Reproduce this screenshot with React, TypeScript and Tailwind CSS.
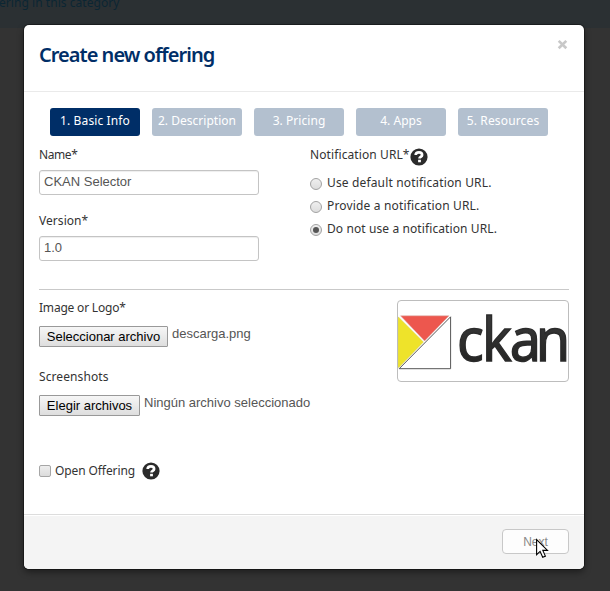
import React from "react";

const tabs = [
  { label: "1. Basic Info", tracking: "tracking-[0.12px]", active: true },
  { label: "2. Description", tracking: "tracking-[0.02px]", active: false },
  { label: "3. Pricing", tracking: "tracking-[0.05px]", active: false },
  { label: "4. Apps", tracking: "tracking-[0.05px]", active: false },
  { label: "5. Resources", tracking: "tracking-[0.15px]", active: false },
];

const options = [
  { label: "Use default notification URL.", tracking: "tracking-[0.15px]", checked: false },
  { label: "Provide a notification URL.", tracking: "tracking-[0.16px]", checked: false },
  { label: "Do not use a notification URL.", tracking: "tracking-[0.1px]", checked: true },
];

function Help() {
  return (
    <svg className="size-[18px] shrink-0" viewBox="0 0 18 18">
      <circle cx="9" cy="9" r="8.6" fill="#2b2b2b" />
      <path d="M5.7 7.1C5.7 5.1 7.2 4.4 9 4.4s3.1 1 3.1 2.5c0 2-2.6 1.9-2.6 3.6" fill="none" stroke="#fff" strokeWidth="2.7" />
      <path d="M8.1 11.8h2.8v2.5H8.1z" fill="#fff" />
    </svg>
  );
}

function Field({ label, value, tracking }: { label: string; value: string; tracking: string }) {
  return (
    <div className="h-[66px]">
      <div className={`h-[23px] leading-[16px] ${tracking}`}>{label}</div>
      <div className="h-[25px] w-[220px] rounded-[3px] border border-[#c4c4c4] bg-white pl-[4px] font-['Liberation_Sans',sans-serif] text-[13px] leading-[22px] text-[#555] shadow-[inset_0_1px_1px_rgba(0,0,0,0.07)]">
        {value}
      </div>
    </div>
  );
}

function FilePicker({ label, button, width, value, tracking }: { label: string; button: string; width: string; value: string; tracking: string }) {
  return (
    <div className="h-[69px]">
      <div className={`h-[26px] leading-[16px] ${tracking}`}>{label}</div>
      <div className="flex gap-1 whitespace-nowrap font-['Liberation_Sans',sans-serif] text-[13px]">
        <div className={`h-[21px] rounded-[1px] border border-[#999] bg-linear-to-b from-[#f6f6f6] to-[#dedede] text-center leading-[19px] text-black ${width}`}>
          {button}
        </div>
        <div className="leading-[15px] text-[#555]">{value}</div>
      </div>
    </div>
  );
}

function CkanLogo() {
  return (
    <svg className="block h-[80px] w-[170px]" viewBox="398 301 170 80">
      <defs>
        <linearGradient id="ink" x1="0" y1="0" x2="0" y2="1">
          <stop offset="0.3" stopColor="#383838" />
          <stop offset="1" stopColor="#1d1d1b" />
        </linearGradient>
      </defs>
      <path d="M400.5 315.8H449L424.6 341z" fill="#ed574e" stroke="#d9b4ae" strokeWidth="0.5" />
      <path d="M398.5 317l25 25L399 367.5h-1V317z" fill="#eee32a" stroke="#cfc987" strokeWidth="0.4" />
      <path d="M450.6 316.8V368.7H399.2z" fill="#fff" stroke="#555" strokeWidth="1" />
      <text
        transform="translate(457 361) scale(0.93 1)"
        x="0 26.8 56.8 84.8"
        y="0"
        fontFamily="'Noto Sans', sans-serif"
        fontSize="60"
        stroke="#2b2b2b"
        strokeWidth="1.4"
        fill="url(#ink)"
      >
        ckan
      </text>
    </svg>
  );
}

export default function App() {
  return (
    <div className="relative h-[591px] w-[610px] overflow-hidden bg-[#333] font-['Noto_Sans',sans-serif] text-[12px] text-[#333]">
      <div className="h-[28px] bg-[#2b3033] leading-[6px] text-[#0b2633]">
        <span className="ml-[-1px] text-[12px] tracking-[0.05px]">ering in this category</span>
      </div>
      <div className="absolute left-[24px] top-[25px] flex h-[544px] w-[560px] flex-col overflow-hidden rounded-[5px] bg-white shadow-[0_3px_7px_rgba(0,0,0,0.45),0_0_0_1px_rgba(0,0,0,0.35)]">
        <header className="flex h-[67px] shrink-0 justify-between border-b border-[#eaeaea] pl-[15px] pr-[16px]">
          <h1 className="pt-[15px] text-[20px] font-semibold leading-[30px] tracking-[-0.98px] text-[#002e67]">Create new offering</h1>
          <svg className="mt-[14px] size-[11px]" viewBox="0 0 11 11">
            <path d="M1.7 1.9l7.6 7.4M9.3 1.9L1.7 9.3" stroke="#c8c8c8" strokeWidth="2.7" />
          </svg>
        </header>
        <main className="flex-1 px-[15px] pt-[16px]">
          <nav className="flex gap-3 px-[11px]">
            {tabs.map((t) => (
              <div key={t.label} className={`h-[28px] w-[90px] whitespace-nowrap rounded-[3px] text-center leading-[25px] text-white ${t.tracking} ${t.active ? "bg-[#002e67]" : "bg-[#b3c0cf]"}`}>
                {t.label}
              </div>
            ))}
          </nav>
          <div className="flex h-[154px] border-b border-[#c9c9c9] pt-[11px]">
            <div className="w-[271px]">
              <Field label="Name*" value="CKAN Selector" tracking="tracking-[-0.4px]" />
              <Field label="Version*" value="1.0" tracking="tracking-[0.05px]" />
            </div>
            <div>
              <div className="flex h-[25px] tracking-[0.1px]">
                <span className="leading-[16px]">Notification URL*</span>
                <span className="pt-px"><Help /></span>
              </div>
              {options.map((o) => (
                <div key={o.label} className={`flex h-[23px] items-start gap-[5px] whitespace-nowrap leading-[21px] ${o.tracking}`}>
                  <span className="mt-[6px] flex size-3 shrink-0 items-center justify-center rounded-full border border-[#a2a2a2] bg-linear-to-b from-[#efefef] to-[#ddd]">
                    {o.checked && <span className="size-[6px] rounded-full bg-[#555]" />}
                  </span>
                  {o.label}
                </div>
              ))}
            </div>
          </div>
          <div className="flex justify-between">
            <div className="pt-[10px]">
              <FilePicker label="Image or Logo*" button="Seleccionar archivo" width="w-[129px]" value="descarga.png" tracking="tracking-[-0.2px]" />
              <FilePicker label="Screenshots" button="Elegir archivos" width="w-[101px]" value="Ningún archivo seleccionado" tracking="tracking-[0.1px]" />
              <div className="flex items-center pt-[23px] leading-[20px]">
                <span className="mr-1 size-3 rounded-[2px] border border-[#a6a6a6] bg-linear-to-b from-[#eee] to-[#dcdcdc]" />
                <span className="mr-[7px] tracking-[-0.1px]">Open Offering</span>
                <Help />
              </div>
            </div>
            <div className="mt-[10px] h-[82px] w-[172px] overflow-hidden rounded-[4px] border border-[#bdbdbd]">
              <CkanLogo />
            </div>
          </div>
        </main>
        <footer className="flex h-[55px] shrink-0 justify-end border-t border-[#ddd] bg-[#f4f4f4] pr-[15px] pt-[14px] shadow-[inset_0_1px_0_#fff]">
          <div className="h-[25px] w-[67px] rounded-[4px] border border-[#c8c8c8] bg-[#fdfdfd] text-center font-['Liberation_Sans',sans-serif] text-[12px] leading-[24px] text-[#888]">
            Next
          </div>
        </footer>
      </div>
      <svg className="absolute left-[535px] top-[538px] h-[21px] w-[15px]" viewBox="0 0 15 21">
        <path d="M1.6 1.5v15.2l3.5-3.3 2.6 5.9 2.7-1.2-2.6-5.7h4.7z" fill="#fff" stroke="#000" strokeWidth="1.1" />
      </svg>
    </div>
  );
}
